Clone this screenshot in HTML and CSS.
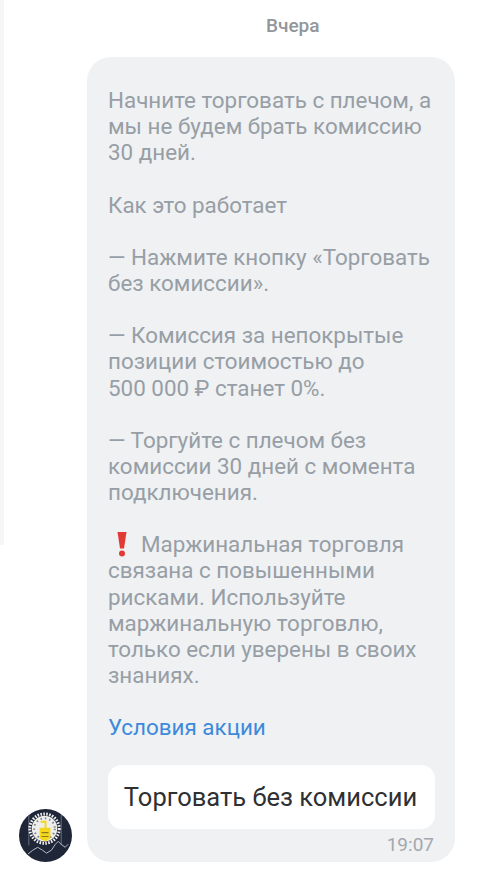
FILE: index.html
```html
<!DOCTYPE html>
<html lang="ru">
<head>
<meta charset="utf-8">
<title>Чат</title>
<link rel="stylesheet" href="styles.css">
</head>
<body>
<div class="strip"></div>
<main class="chat">
  <div class="date">Вчера</div>
  <div class="row">
    <svg class="avatar" viewBox="0 0 54 54" aria-hidden="true">
      <circle cx="27" cy="27" r="27" fill="#1e2638"/>
      <path d="M10 6V37M43 6V37" stroke="#6a7284" stroke-width="1" fill="none"/>
      <circle cx="26" cy="20" r="15" fill="none" stroke="#f2f2f0" stroke-width="3" stroke-dasharray="1.6 1.4"/>
      <circle cx="26" cy="20" r="13" fill="#eeeeec"/>
      <circle cx="26" cy="20" r="10.5" fill="none" stroke="#7d818a" stroke-width="2" stroke-dasharray="1.5 3"/>
      <path d="M21 19h5v-5h-4v-2h6v7h4v11l-5 3-6-3z" fill="#f4d61d"/>
      <path d="M23 24h7M23 28h7" stroke="#8b7a20" stroke-width="1.2"/>
      <path d="M9 46l5-4 5-3 5 3 4 3 5-3 4-6 3-3 3 3 4 3 3-3" fill="none" stroke="#b9bec8" stroke-width="1"/>
    </svg>
    <article class="bubble">
      <p>Начните торговать с плечом, а мы не будем брать комиссию 30&nbsp;дней.</p>
      <p>Как это работает</p>
      <p>— Нажмите кнопку «Торговать без комиссии».</p>
      <p>— Комиссия за непокрытые позиции стоимостью до<br>500&nbsp;000&nbsp;₽ станет 0%.</p>
      <p>— Торгуйте с плечом без комиссии 30 дней с момента подключения.</p>
      <p><svg class="bang" viewBox="0 0 12 26" aria-hidden="true"><path d="M1.5 1h9L8 17.5H4z" fill="#e23b36"/><circle cx="6" cy="22.5" r="3" fill="#e23b36"/></svg>Маржинальная торговля связана с повышенными рисками. Используйте маржинальную торговлю, только если уверены в своих знаниях.</p>
      <a class="link" href="#">Условия акции</a>
      <button class="action" type="button">Торговать без комиссии</button>
      <time class="time">19:07</time>
    </article>
  </div>
</main>
</body>
</html>
```
FILE: styles.css
```css
* { box-sizing: border-box; }
html, body { margin: 0; height: 100%; background: #fff; }
body { font-family: Roboto, "Noto Sans", sans-serif; overflow: hidden; position: relative; }
.strip { position: absolute; left: 0; top: 0; width: 4px; height: 545px; background: #f5f6f8; }
.chat { padding: 15px 36px 0 19px; }
.date { margin-left: 247px; font-size: 19px; line-height: 22px; font-weight: 500; color: #92969b; }
.row { display: flex; align-items: flex-end; gap: 15px; margin-top: 20px; }
.avatar { width: 53px; height: 53px; flex: none; }
.bubble { width: 368px; height: 805px; background: #eff1f3; border-radius: 24px; padding: 30px 21px 0; display: flex; flex-direction: column; }
.bubble p { margin: 0 0 26.14px; font-size: 22.4px; line-height: 26.14px; color: #979ea5; }
.bang { width: 12px; height: 26px; vertical-align: -5px; margin: 0 13px 0 8px; }
.link { font-size: 22.4px; line-height: 26px; color: #3d8adb; text-decoration: none; }
.action { margin-top: 25px; height: 64px; width: 327px; border: 0; border-radius: 14px; background: #fff; font: 400 25.5px Roboto, sans-serif; color: #2f3033; padding: 0 2px 0 0; }
.time { align-self: flex-end; margin-top: 5px; font-size: 19px; line-height: 22px; color: #a3a8ae; }
```
